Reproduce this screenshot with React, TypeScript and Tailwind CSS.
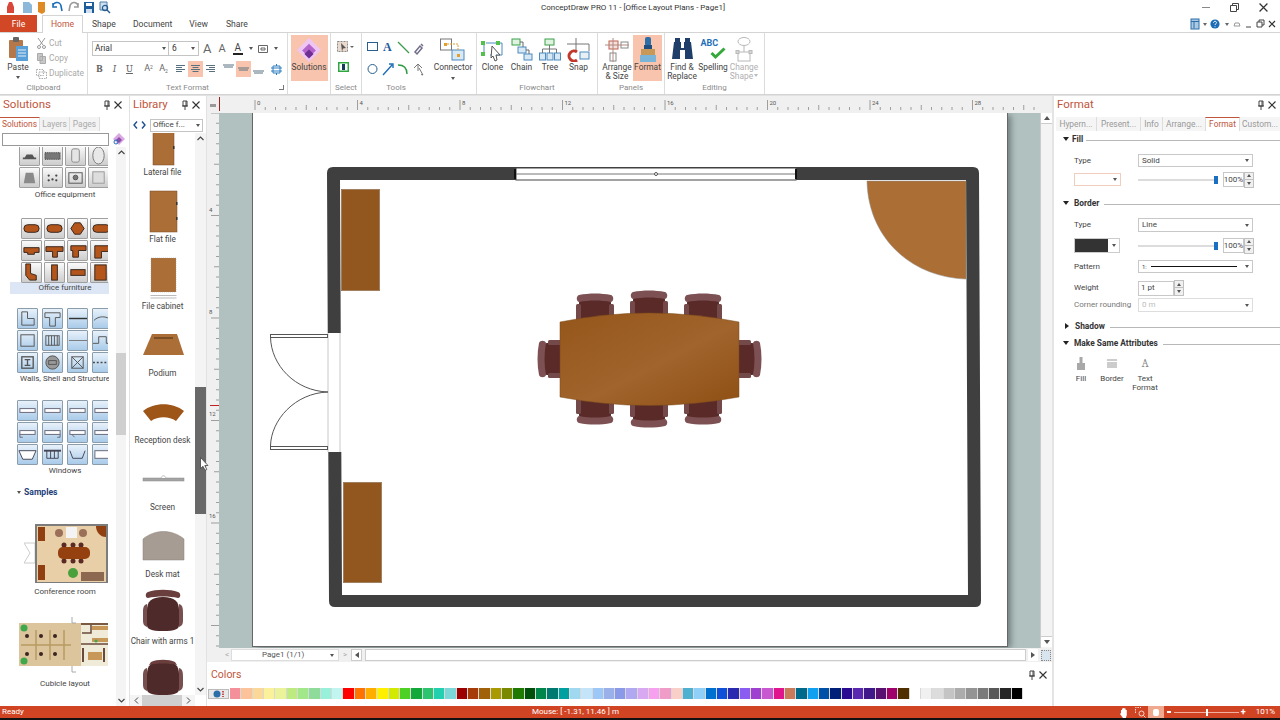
import type { ReactNode } from 'react';

const FONT = 'Roboto, "Open Sans", sans-serif';

const COLORS = [
    '#f4909a', '#fcc29a', '#fcd898', '#fbf19a', '#eaf29a', '#bdeb80', '#a2e88a', '#8fdc9a', '#96f0da', '#c2f5f0',
    '#ff0000', '#ff7300', '#ffae00', '#fff000', '#d2ea00', '#4fd024', '#12a83a', '#2cc46f', '#22d0b0', '#7cd8d8',
    '#9c0000', '#a53c0a', '#a0610a', '#a89a00', '#7a8a00', '#1e7a00', '#004f0a', '#00854a', '#007a70', '#00a0a0',
    '#a0d8f0', '#c4e4fa', '#9cc8f8', '#9ab0e8', '#8a9ae8', '#b0a8f0', '#d8a8f0', '#f8a0f0', '#f09cc8', '#f8d0c8',
    '#50b0d0', '#90d0f8', '#0070d0', '#1050d8', '#2a2ab0', '#8a5cf0', '#a040d0', '#c858d0', '#e0148c', '#c87a5a',
    '#006a8c', '#10a0f0', '#0050a8', '#001f78', '#2a0a90', '#5a28b0', '#40188a', '#5a1070', '#a0006a', '#503000',
    '#ffffff', '#f0f0f0', '#dcdcdc', '#c4c4c4', '#acacac', '#949494', '#7a7a7a', '#585858', '#262626', '#000000',
];

function Caret({ className = '' }: { className?: string }) {
    return <span className={'inline-block w-0 h-0 border-l-[2.5px] border-r-[2.5px] border-t-[3px] border-l-transparent border-r-transparent border-t-[#555] ' + className} />;
}

function Pin() {
    return (
        <svg width="8" height="10" viewBox="0 0 8 10" fill="none" stroke="#444" strokeWidth="1">
            <path d="M2 1h4v5H2zM1 6h6M4 6v4M5 1v5" />
        </svg>
    );
}

function CloseX({ size = 8, color = '#333' }: { size?: number; color?: string }) {
    return (
        <svg width={size} height={size} viewBox="0 0 8 8" stroke={color} strokeWidth="1.1">
            <path d="M0.5 0.5l7 7M7.5 0.5l-7 7" />
        </svg>
    );
}

function PanelHeader({ title, right = 'pr-[6px]' }: { title: string; right?: string }) {
    return (
        <div className={'h-[21px] shrink-0 flex items-center justify-between pl-[3px] pb-[3px] ' + right}>
            <span className="text-[11.5px] text-[#c1553b]">{title}</span>
            <div className="flex items-center gap-[3px]"><Pin /><CloseX /></div>
        </div>
    );
}

function QuickAccess() {
    return (
        <div className="absolute left-[7px] top-0 h-[15px] flex items-center gap-[6px]">
            <svg width="104" height="13" viewBox="0 0 104 13">
                <path d="M0 12V6l2-5h3l2 5v6z" fill="#d8473a" />
                <path d="M16 1h6l3 3v8h-9z" fill="#8cb8da" />
                <path d="M31 1h7v10l-3 2-4-2z" fill="#e08a26" />
                <path d="M46 6a4 4 0 0 1 8-1l1 5M46 2v4h4" fill="none" stroke="#1c6db5" strokeWidth="1.6" />
                <path d="M71 6a4 4 0 0 0-8-1l-1 5M71 2v4h-4" fill="none" stroke="#9a9a9a" strokeWidth="1.6" />
                <rect x="77" y="1" width="10" height="11" fill="#1f5c9c" />
                <rect x="79" y="2" width="6" height="3" fill="#fff" />
                <rect x="79" y="8" width="6" height="4" fill="#cfe0ef" />
                <path d="M93 1h7v8h-7z" fill="#cfe0ef" stroke="#4a7fae" />
                <circle cx="98" cy="7" r="2.6" fill="none" stroke="#275d8f" strokeWidth="1.2" />
                <path d="M100 9l3 3" stroke="#275d8f" strokeWidth="1.4" />
            </svg>
        </div>
    );
}

function TitleBar() {
    return (
        <div className="relative h-[15px] shrink-0 flex items-center justify-center pr-[14px] pt-px">
            <QuickAccess />
            <span className="text-[8px] text-[#333]">ConceptDraw PRO 11 - [Office Layout Plans - Page1]</span>
            <div className="absolute right-[12px] top-[3px] flex items-center gap-[20px]">
                <div className="w-[8px] h-px bg-[#888]" />
                <svg width="9" height="9" viewBox="0 0 9 9" fill="none" stroke="#444"><path d="M0.5 2.5h6v6h-6zM2.5 2.5v-2h6v6h-2" /></svg>
                <CloseX size={9} />
            </div>
        </div>
    );
}

function TabsRow() {
    return (
        <div className="relative h-[18px] shrink-0 flex items-end border-b border-[#d4d4d4] text-[8.6px] text-[#444]">
            <div className="w-[37px] h-[17px] bg-[#d24726] text-white flex items-center justify-center pt-px">File</div>
            <div className="ml-[5px] w-[41px] h-[18px] bg-white border border-b-0 border-[#d4d4d4] text-[#c1553b] flex items-center justify-center relative top-px">Home</div>
            <span className="ml-[9px] self-center pt-px">Shape</span>
            <span className="ml-[17px] self-center pt-px">Document</span>
            <span className="ml-[17px] self-center pt-px">View</span>
            <span className="ml-[18px] self-center pt-px">Share</span>
            <div className="absolute right-[2px] top-[2px] h-[14px] flex items-center">
                <svg width="88" height="12" viewBox="0 0 88 12">
                    <rect x="1" y="1" width="8" height="10" fill="#a9c9e4" stroke="#2c6ea8" />
                    <path d="M1 3.5h8M4 3.5v7" stroke="#2c6ea8" />
                    <path d="M13 5l2 3 2-3z" fill="#666" />
                    <circle cx="25" cy="6" r="4.6" fill="#1c6db5" />
                    <path d="M23.5 4.8c0-2 3-2 3 0 0 1-1.5 1-1.5 2.2M25 8.3v.8" stroke="#fff" fill="none" />
                    <path d="M35 5l2 3 2-3z" fill="#666" />
                    <path d="M44 8l1-3h4l1 3z" fill="none" stroke="#999" />
                    <path d="M56 9h5" stroke="#444" />
                    <path d="M67 4h5v5h-5zM69 4V2h5v5h-2" fill="none" stroke="#444" />
                    <path d="M79 3l6 6M85 3l-6 6" stroke="#333" strokeWidth="1.2" />
                </svg>
            </div>
        </div>
    );
}

function Group({ width, label, children, line = true }: { width: string; label: string; children: ReactNode; line?: boolean }) {
    return (
        <div className={'shrink-0 h-full flex flex-col ' + width + (line ? ' border-r border-[#dcdcdc]' : '')}>
            <div className="flex-1 min-h-0 flex">{children}</div>
            <div className="h-[13px] text-[8px] text-[#8a8a8a] text-center leading-[13px] relative">{label}</div>
        </div>
    );
}

function BigButton({ width, label, icon, active, muted, caret }: { width: string; label: ReactNode; icon: ReactNode; active?: boolean; muted?: boolean; caret?: boolean }) {
    return (
        <div className={'shrink-0 h-[46px] mt-[2px] flex flex-col items-center text-[8.4px] leading-[9px] text-center ' + width + (active ? ' bg-[#f8c4ae]' : '') + (muted ? ' text-[#b0b0b0]' : ' text-[#444]')}>
            <div className="h-[27px] flex items-center justify-center shrink-0 pt-[2px]">{icon}</div>
            <div className="mt-px">{label}</div>
            {caret && <Caret className="mt-[5px]" />}
        </div>
    );
}

function SmallEdit({ label, children }: { label: string; children: ReactNode }) {
    return (
        <div className="h-[15px] flex items-center gap-[2px] text-[8.4px] text-[#aaa]">
            <span className="w-[11px] flex justify-center">{children}</span>
            {label}
        </div>
    );
}

function FormatIcon({ children, active, w = 'w-[15px]' }: { children: ReactNode; active?: boolean; w?: string }) {
    return <div className={'h-[16px] shrink-0 flex items-center justify-center text-[#666] ' + w + (active ? ' bg-[#f8c4ae]' : '')}>{children}</div>;
}

function AlignLines({ d }: { d: string }) {
    return <svg width="11" height="10" viewBox="0 0 11 10" stroke="#59707f" strokeWidth="1"><path d={d} /></svg>;
}

function Clipboard() {
    return (
        <Group width="w-[88px]" label="Clipboard">
            <div className="w-[36px] h-[46px] mt-[2px] flex flex-col items-center text-[8.4px] text-[#444] shrink-0">
                <svg className="mt-[2px]" width="19" height="24" viewBox="0 0 19 24">
                    <rect x="0" y="3" width="14" height="18" rx="1" fill="#b4784a" />
                    <rect x="4" y="0" width="6" height="5" rx="1" fill="#666" />
                    <rect x="7" y="9" width="12" height="15" fill="#5aa0d8" />
                    <path d="M9 13h8M9 16h8M9 19h8" stroke="#e4f0f8" />
                </svg>
                <span className="mt-px leading-[10px]">Paste</span>
                <Caret className="mt-[4px]" />
            </div>
            <div className="flex flex-col pt-[3px]">
                <SmallEdit label="Cut">
                    <svg width="9" height="11" viewBox="0 0 9 11" fill="none" stroke="#999"><path d="M1 0l5 7M8 0L3 7" /><circle cx="2" cy="9" r="1.5" /><circle cx="7" cy="9" r="1.5" /></svg>
                </SmallEdit>
                <SmallEdit label="Copy">
                    <svg width="9" height="11" viewBox="0 0 9 11" fill="#c8c8c8" stroke="#aaa"><path d="M.5.5h5v7h-5zM3 3.5h5.5v7H3z" /></svg>
                </SmallEdit>
                <SmallEdit label="Duplicate">
                    <svg width="11" height="10" viewBox="0 0 11 10" fill="none" stroke="#aaa" strokeDasharray="1.5 1"><path d="M.5.5h7v6h-7zM3 3h7.5v6.5H3z" /></svg>
                </SmallEdit>
            </div>
        </Group>
    );
}

function TextFormat() {
    return (
        <Group width="w-[200px]" label="Text Format">
            <div className="flex flex-col pl-[4px] pt-[8px] relative w-full">
                <div className="flex items-center h-[15px]">
                    <div className="w-[77px] h-[15px] border border-[#c4c4c4] flex items-center justify-between px-[2px] text-[8.4px] text-[#333]">Arial<Caret /></div>
                    <div className="w-[30px] h-[15px] border border-l-0 border-[#c4c4c4] flex items-center justify-between px-[3px] text-[8.4px] text-[#333]">6<Caret /></div>
                    <span className="ml-[4px] text-[13px] text-[#666] leading-none">A</span>
                    <span className="ml-[7px] text-[11px] text-[#666] leading-none">A</span>
                    <div className="ml-[7px] flex flex-col items-center text-[10px] leading-[10px] text-[#444]">A<div className="w-[10px] h-[2px] bg-[#222]" /></div>
                    <Caret className="ml-[6px]" />
                    <svg className="ml-[5px]" width="10" height="8" viewBox="0 0 10 8" fill="none" stroke="#666"><path d="M.5.5h9v7h-9zM3 3h4v2H3z" /></svg>
                    <Caret className="ml-[6px]" />
                </div>
                <div className="flex items-center h-[16px] mt-[5px]">
                    <FormatIcon><b className="text-[10px] font-serif">B</b></FormatIcon>
                    <FormatIcon><i className="text-[10px] font-serif">I</i></FormatIcon>
                    <FormatIcon><u className="text-[10px] font-serif">U</u></FormatIcon>
                    <div className="w-[4px]" />
                    <FormatIcon><span className="text-[9px]">A<sup className="text-[5px]">2</sup></span></FormatIcon>
                    <FormatIcon><span className="text-[9px]">A<sub className="text-[5px]">2</sub></span></FormatIcon>
                    <div className="w-[2px]" />
                    <FormatIcon><AlignLines d="M1 1.5h9M1 3.5h6M1 5.5h9M1 7.5h6" /></FormatIcon>
                    <FormatIcon active><AlignLines d="M1 1.5h9M2.5 3.5h6M1 5.5h9M2.5 7.5h6" /></FormatIcon>
                    <FormatIcon><AlignLines d="M1 1.5h9M4 3.5h6M1 5.5h9M4 7.5h6" /></FormatIcon>
                    <div className="w-[3px]" />
                    <FormatIcon><AlignLines d="M0 1h11M1 3h9" /></FormatIcon>
                    <FormatIcon active><AlignLines d="M0 4h11M1 6h9" /></FormatIcon>
                    <FormatIcon><AlignLines d="M0 7h11M1 9h9" /></FormatIcon>
                    <div className="w-[2px]" />
                    <FormatIcon w="w-[16px]">
                        <svg width="11" height="11" viewBox="0 0 11 11" fill="none" stroke="#2c7cc0"><path d="M2 2h7v7H2zM0 4h11M0 7h11M5.5 0v2M5.5 9v2" /></svg>
                    </FormatIcon>
                </div>
                <div className="absolute right-[3px] bottom-[-9px] w-[5px] h-[5px] border-r border-b border-[#777]" />
            </div>
        </Group>
    );
}

function SolutionsIcon() {
    return (
        <svg width="24" height="24" viewBox="0 0 21 21">
            <path d="M10.5 0L21 10.5 10.5 21 0 10.5z" fill="#efc6f3" />
            <path d="M10.5 5l6 6-6 6-6-6z" fill="#b264c8" />
            <path d="M10.5 10l4 4-4 4-4-4z" fill="#6e2d92" />
        </svg>
    );
}

function SelectTools() {
    return (
        <Group width="w-[31px]" label="Select">
            <div className="w-full flex flex-col items-center gap-[8px] pt-[8px]">
                <svg width="18" height="13" viewBox="0 0 18 13"><rect x=".5" y=".5" width="10" height="10" fill="#ead9cc" stroke="#888" strokeDasharray="2 1" /><path d="M4 2l5 5-3 .5-1 3z" fill="#555" /><path d="M13 5l2 2 2-2z" fill="#666" /></svg>
                <svg className="mr-[6px]" width="11" height="10" viewBox="0 0 11 10"><rect width="11" height="10" fill="#2ea83e" /><rect x="1.5" y="1.5" width="8" height="7" fill="#fff" /><rect x="4" y="2" width="3" height="6" fill="#173a5a" /></svg>
            </div>
        </Group>
    );
}

function ToolsGroup() {
    return (
        <Group width="w-[68px]" label="Tools" line={false}>
            <svg className="ml-[5px] mt-[8px]" width="58" height="36" viewBox="0 0 58 36" fill="none">
                <rect x=".5" y="1.5" width="10" height="8" stroke="#285f8f" />
                <text x="16" y="10" fontFamily="Liberation Serif, serif" fontWeight="700" fontSize="12" fill="#1f5c9c">A</text>
                <path d="M31 1l11 11" stroke="#3a9a4c" strokeWidth="1.3" />
                <path d="M48 11l5-6 2 2-5 6zM54 3l2 2" stroke="#6e6e8a" strokeWidth="1.5" />
                <circle cx="5.5" cy="28" r="4.5" stroke="#285f8f" />
                <path d="M16 34l9-10M22 23h4v4" stroke="#1f70b8" strokeWidth="1.4" />
                <path d="M31 24c6 0 9 3 9 9" stroke="#2e9a44" strokeWidth="1.4" />
                <path d="M47 27l4-4 4 4M51 24v6M52 27l4 7-2-.5" stroke="#777" />
            </svg>
        </Group>
    );
}

function ConnectorIcon() {
    return (
        <svg width="26" height="24" viewBox="0 0 26 24" fill="none">
            <rect x=".5" y="1" width="11" height="11" stroke="#777" fill="#fff" />
            <rect x="12" y="12" width="12" height="10" stroke="#4c8bc0" fill="#d8e8f4" />
            <rect x="4" y="5" width="3" height="3" fill="#e0a030" />
            <rect x="17" y="16" width="3" height="3" fill="#e0a030" />
            <path d="M7 6h11v7" stroke="#e0a030" strokeDasharray="2 1" />
        </svg>
    );
}

function CloneIcon() {
    return (
        <svg width="24" height="24" viewBox="0 0 24 24" fill="none">
            <path d="M5 5h16v12H9" stroke="#4c8bc0" />
            <path d="M3 5v11" stroke="#4c8bc0" />
            <rect x="0" y="3" width="4" height="4" fill="#52c04a" /><rect x="15" y="3" width="4" height="4" fill="#52c04a" /><rect x="0" y="14" width="4" height="4" fill="#52c04a" />
            <path d="M11 8l8 9-4 0 1 5-2 1-2-5-2 2z" fill="#fff" stroke="#555" />
        </svg>
    );
}

function ChainIcon() {
    return (
        <svg width="22" height="23" viewBox="0 0 22 23" fill="none">
            <rect x="1" y="1" width="8" height="6" stroke="#3aa04a" fill="#e0f2e0" />
            <rect x="7" y="9" width="8" height="6" stroke="#4c8bc0" fill="#d8e8f4" />
            <rect x="13" y="16" width="8" height="6" stroke="#4c8bc0" fill="#d8e8f4" />
            <path d="M9 4h3v5M15 12h3v4" stroke="#666" />
        </svg>
    );
}

function TreeIcon() {
    return (
        <svg width="22" height="23" viewBox="0 0 22 23" fill="none">
            <rect x="6" y="1" width="9" height="6" stroke="#3aa04a" fill="#e0f2e0" />
            <rect x="0.5" y="15" width="6" height="7" stroke="#4c8bc0" fill="#d8e8f4" />
            <rect x="8" y="15" width="6" height="7" stroke="#4c8bc0" fill="#d8e8f4" />
            <rect x="15.5" y="15" width="6" height="7" stroke="#4c8bc0" fill="#d8e8f4" />
            <path d="M10.5 7v8M3.5 15v-4h14v4" stroke="#777" />
        </svg>
    );
}

function SnapIcon() {
    return (
        <svg width="24" height="24" viewBox="0 0 24 24" fill="none">
            <path d="M0 6h22M9 0v12M22 6v7" stroke="#777" />
            <path d="M10 14a5 5 0 1 0 0 8" stroke="#c0392b" strokeWidth="3" />
            <rect x="13" y="14" width="9" height="7" stroke="#4c8bc0" fill="#e8f0f6" />
        </svg>
    );
}

function ArrangeIcon() {
    return (
        <svg width="24" height="24" viewBox="0 0 24 24" fill="none">
            <rect x="4" y="3" width="9" height="8" stroke="#c06050" fill="#f4e0dc" />
            <rect x="16" y="4" width="7" height="6" stroke="#888" />
            <rect x="5" y="15" width="6" height="8" stroke="#888" />
            <path d="M0 7h24M8 0v24" stroke="#b08880" />
        </svg>
    );
}

function BrushIcon() {
    return (
        <svg width="20" height="26" viewBox="0 0 20 26">
            <rect x="7" y="0" width="6" height="9" rx="2" fill="#2c6ea8" />
            <rect x="6" y="8" width="8" height="4" fill="#1f4f80" />
            <path d="M3 12h14v6H3z" fill="#c89858" />
            <path d="M2 18h16v7H2z" fill="#7ab4d8" />
        </svg>
    );
}

function BinocularsIcon() {
    return (
        <svg width="21" height="23" viewBox="0 0 21 23" fill="#1f3f6a">
            <path d="M3 0h5v4H3zM13 0h5v4h-5z" />
            <path d="M2 4h7v6h3V4h7l2 17h-8v-9h-5v9H0z" />
        </svg>
    );
}

function SpellingIcon() {
    return (
        <div className="relative w-[25px] h-[22px]">
            <span className="absolute left-0 top-0 text-[9px] font-bold text-[#1f70b8] leading-none">ABC</span>
            <svg className="absolute left-[9px] top-[8px]" width="16" height="13" viewBox="0 0 16 13" fill="none" stroke="#35a83a" strokeWidth="3"><path d="M1.5 6l4 4 9-8.5" /></svg>
        </div>
    );
}

function ChangeShapeIcon() {
    return (
        <svg width="20" height="25" viewBox="0 0 20 25" fill="none" stroke="#b8b8b8">
            <ellipse cx="10" cy="4.5" rx="6" ry="4" />
            <path d="M10 9v6" />
            <rect x="4" y="15" width="12" height="9" />
            <rect x="2" y="13.5" width="3" height="3" fill="#d8d8d8" /><rect x="15" y="13.5" width="3" height="3" fill="#d8d8d8" />
        </svg>
    );
}

function Ribbon() {
    return (
        <div className="h-[62px] shrink-0 flex border-b border-[#d4d4d4]">
            <Clipboard />
            <TextFormat />
            <div className="w-[43px] shrink-0 h-full flex justify-center border-r border-[#dcdcdc]">
                <BigButton width="w-[37px]" label="Solutions" icon={<SolutionsIcon />} active />
            </div>
            <SelectTools />
            <ToolsGroup />
            <div className="w-[47px] shrink-0 h-full border-r border-[#dcdcdc] flex justify-center">
                <BigButton width="w-[44px]" label="Connector" icon={<ConnectorIcon />} caret />
            </div>
            <Group width="w-[121px]" label="Flowchart">
                <div className="w-px" />
                <BigButton width="w-[29px]" label="Clone" icon={<CloneIcon />} />
                <BigButton width="w-[29px]" label="Chain" icon={<ChainIcon />} />
                <BigButton width="w-[28px]" label="Tree" icon={<TreeIcon />} />
                <BigButton width="w-[29px]" label="Snap" icon={<SnapIcon />} />
            </Group>
            <Group width="w-[67px]" label="Panels">
                <div className="w-[3px]" />
                <BigButton width="w-[32px]" label={<>Arrange<br />&amp; Size</>} icon={<ArrangeIcon />} />
                <BigButton width="w-[29px]" label="Format" icon={<BrushIcon />} active />
            </Group>
            <Group width="w-[100px]" label="Editing">
                <div className="w-px" />
                <BigButton width="w-[32px]" label={<>Find &amp;<br />Replace</>} icon={<BinocularsIcon />} />
                <BigButton width="w-[30px]" label="Spelling" icon={<SpellingIcon />} />
                <BigButton width="w-[32px]" label={<>Change<br />Shape<Caret className="ml-[1px] mb-[2px] opacity-40" /></>} icon={<ChangeShapeIcon />} muted />
            </Group>
        </div>
    );
}

const ORANGE = '#b4561c';
const DARK = '#33241a';

// tile drawings use a 20x20 box
const EQUIPMENT: ReactNode[] = [
    <path key="a" d="M3 12h14v2H3zM7 9h6l2 3H5z" fill="#555" />,
    <rect key="b" x="2" y="7" width="16" height="7" fill="#777" stroke="#333" strokeDasharray="1 1" />,
    <rect key="c" x="6" y="3" width="8" height="14" rx="2" fill="#e4e4e4" stroke="#888" />,
    <ellipse key="d" cx="10" cy="10" rx="6" ry="9" fill="#e8e8e8" stroke="#777" />,
    <path key="e" d="M6 5h8l2 11H4z" fill="#8a8a8a" />,
    <g key="f" fill="#444"><circle cx="6" cy="8" r="1.2" /><circle cx="10" cy="12" r="1.2" /><circle cx="14" cy="8" r="1.2" /><circle cx="6" cy="13" r="1.2" /><circle cx="14" cy="13" r="1.2" /></g>,
    <g key="g" fill="none" stroke="#555"><rect x="3" y="5" width="14" height="11" /><circle cx="10" cy="10" r="2.5" fill="#777" /></g>,
    <rect key="h" x="4" y="4" width="12" height="12" fill="#ddd" stroke="#999" />,
];

const tbl = (k: string, d: ReactNode) => <g key={k} fill={ORANGE} stroke={DARK} strokeWidth="1">{d}</g>;

const FURNITURE: ReactNode[] = [
    tbl('a', <rect x="2" y="6" width="16" height="8" rx="4" />),
    tbl('b', <rect x="2" y="6" width="16" height="8" rx="4" />),
    tbl('c', <path d="M7 4h6l4 6-4 6H7l-4-6z" />),
    tbl('d', <rect x="2" y="6" width="18" height="8" rx="4" />),
    tbl('e', <path d="M2 7h16v5h-5v2H6v-2H2z" />),
    tbl('f', <path d="M1 6h18v5h-6v6H8v-6H1z" />),
    tbl('g', <path d="M3 5h16v5h-8v7H5v-7H3z" />),
    tbl('h', <path d="M4 5h16v6h-9v7H4z" />),
    tbl('i', <path d="M4 1h5v10l6 2v5H8l-4-5z" />),
    tbl('j', <rect x="7" y="2" width="6" height="16" />),
    tbl('k', <rect x="3" y="7" width="15" height="6" />),
    tbl('l', <rect x="4" y="2" width="12" height="16" />),
];

const W = '#555';
const WALLS: ReactNode[] = [
    <path key="a" d="M4 3h6v7h7v7H4z" fill="none" stroke={W} />,
    <path key="b" d="M2 4h16v5h-5v9H7V9H2z" fill="none" stroke={W} />,
    <path key="c" d="M1 10h19" stroke="#333" strokeWidth="1.5" />,
    <path key="d" d="M1 12c5-5 13-5 19 0" fill="none" stroke={W} />,
    <rect key="e" x="3" y="4" width="14" height="12" fill="none" stroke={W} />,
    <g key="f" fill="none" stroke={W}><rect x="3" y="5" width="14" height="10" /><path d="M6 5v10M9 5v10M12 5v10M15 5v10" /></g>,
    <path key="g" d="M1 10h19" stroke="#777" />,
    <path key="h" d="M0 13h6V6h8v7h6" fill="none" stroke={W} />,
    <g key="i" fill="none" stroke={W} strokeWidth="1.4"><rect x="4" y="4" width="12" height="12" /><path d="M7 7h6M10 7v6M7 13h6" /></g>,
    <g key="j" fill="#999" stroke="#555"><circle cx="10" cy="10" r="7" /><rect x="6" y="8" width="8" height="4" /></g>,
    <g key="k" fill="none" stroke={W}><rect x="4" y="4" width="12" height="12" /><path d="M4 4l12 12M16 4L4 16" /></g>,
    <path key="l" d="M0 10h20" stroke="#444" strokeDasharray="2 2" strokeWidth="1.5" />,
];

const win = (k: string, extra?: ReactNode) => (
    <g key={k} fill="#fff" stroke="#667">
        <rect x="2" y="8" width="16" height="4" />
        {extra}
    </g>
);

const WINDOWS: ReactNode[] = [
    win('a'), win('b'), win('c'), win('d'),
    win('e', <path d="M2 12v3h3" fill="none" />), win('f', <path d="M18 12v3h-3" fill="none" />), win('g', <path d="M4 12l3 3" fill="none" />), win('h', <path d="M14 8l3-3" fill="none" />),
    <path key="i" d="M1 6h18l-4 9H5z" fill="#fff" stroke="#445" />,
    <g key="j" fill="none" stroke="#445"><path d="M1 6h18" strokeWidth="2" /><path d="M4 6v8M8 6v8M12 6v8M16 6v8M4 14h12" /></g>,
    <path key="k" d="M2 6l3 8h10l3-8" fill="none" stroke="#445" />,
    <rect key="l" x="2" y="6" width="18" height="8" fill="#fff" stroke="#667" />,
];

function Tile({ blue, children }: { blue?: boolean; children: ReactNode }) {
    const tone = blue
        ? 'bg-gradient-to-b from-[#e8f1fa] to-[#a9cbe9] border-[#8b9cab]'
        : 'bg-gradient-to-b from-[#fafafa] to-[#cdcdcd] border-[#a0a0a0]';
    return (
        <div className={'shrink-0 w-[21px] h-[21px] border rounded-[1px] ' + tone}>
            <svg className="w-full h-full" viewBox="0 0 20 20">{children}</svg>
        </div>
    );
}

function TileGroup({ items, rows, indent, gap, blue }: { items: ReactNode[]; rows: number; indent: string; gap: string; blue?: boolean }) {
    const perRow = 4;
    const lines = Array.from({ length: rows }, (_, r) => items.slice(r * perRow, (r + 1) * perRow));
    return (
        <div className={'w-[108px] overflow-hidden flex flex-col gap-px ' + indent}>
            {lines.map((line, i) => (
                <div key={i} className={'flex ' + gap}>
                    {line.map((t, j) => <Tile key={j} blue={blue}>{t}</Tile>)}
                </div>
            ))}
        </div>
    );
}

function TileLabel({ text, selected }: { text: string; selected?: boolean }) {
    return (
        <div className={'ml-[10px] w-[99px] overflow-hidden h-[12px] leading-[12px] text-[8px] text-[#444] ' + (selected ? 'bg-[#dce6f4]' : '')}>
            <div className="w-[110px] text-center whitespace-nowrap">{text}</div>
        </div>
    );
}

function ConferenceThumb() {
    return (
        <svg className="block ml-[24px]" width="84" height="59" viewBox="24 524 84 59">
            <path d="M24 543h11v20H24l6-10z" fill="#fff" stroke="#ccc" />
            <rect x="36" y="525" width="71" height="58" fill="#e8cfa8" stroke="#7c7c7c" strokeWidth="2" />
            <rect x="38" y="527" width="7" height="14" fill="#8f3f10" />
            <rect x="38" y="565" width="7" height="15" fill="#8f3f10" />
            <path d="M96 526h10v11c-6 0-10-5-10-11z" fill="#8f3f10" />
            <rect x="66" y="527" width="11" height="11" fill="#f4f4f4" />
            <circle cx="59" cy="533" r="4" fill="#9a7058" /><circle cx="83" cy="533" r="4" fill="#9a7058" />
            <g fill="#5a2a26">
                <circle cx="64" cy="545" r="2.5" /><circle cx="73" cy="545" r="2.5" /><circle cx="81" cy="545" r="2.5" />
                <circle cx="64" cy="561" r="2.5" /><circle cx="73" cy="561" r="2.5" /><circle cx="81" cy="561" r="2.5" />
            </g>
            <rect x="58" y="547" width="32" height="12" rx="5" fill="#95400f" />
            <circle cx="73" cy="573" r="5" fill="#4aa03a" />
            <rect x="81" y="572" width="23" height="9" fill="#8c6850" />
        </svg>
    );
}

function CubicleThumb() {
    return (
        <svg className="block" width="108" height="59" viewBox="0 617 108 59">
            <rect x="19" y="623" width="62" height="43" fill="#dcc49c" />
            <rect x="81" y="623" width="27" height="43" fill="#f0ead8" />
            <g stroke="#b89a62" strokeWidth="1.5" fill="none">
                <path d="M21 645h50M36 630v30M50 630v30M64 630v30" />
            </g>
            <g fill="#3c2420">
                <circle cx="27" cy="636" r="2" /><circle cx="41" cy="636" r="2" /><circle cx="55" cy="636" r="2" />
                <circle cx="27" cy="654" r="2" /><circle cx="41" cy="654" r="2" /><circle cx="55" cy="654" r="2" />
            </g>
            <circle cx="24" cy="628" r="3.5" fill="#3ea84a" /><circle cx="24" cy="661" r="3.5" fill="#3ea84a" />
            <path d="M72 617v6h4M72 666v6h4" fill="none" stroke="#aaa" />
            <rect x="81" y="623" width="27" height="2" fill="#7a5a40" />
            <path d="M82 633h9v-8M81 644h27" stroke="#6a4a3a" strokeWidth="1.5" fill="none" />
            <rect x="92" y="626" width="16" height="4" fill="#c89858" />
            <rect x="92" y="638" width="16" height="4" fill="#c89858" />
            <rect x="88" y="652" width="14" height="8" fill="#c89858" />
            <path d="M83 648v14M104 648v14" stroke="#6a4a3a" strokeWidth="2" />
            <circle cx="96" cy="641" r="1.5" fill="#3ea84a" />
        </svg>
    );
}

function ArrowBtn({ d, className = '' }: { d: string; className?: string }) {
    return <svg className={className} width="7" height="5" viewBox="0 0 7 5" fill="none" stroke="#444" strokeWidth="1.1"><path d={d} /></svg>;
}

function SolutionsPanel() {
    return (
        <div className="w-[129px] shrink-0 flex flex-col min-h-0">
            <PanelHeader title="Solutions" right="pr-[7px]" />
            <div className="h-[14px] shrink-0 flex text-[8.4px] text-[#aaa] relative">
                <div className="w-[40px] border-t border-[#c1553b] border-r border-r-[#ddd] text-[#c1553b] flex items-center justify-center">Solutions</div>
                <div className="w-[30px] bg-[#f3f3f3] border-r border-[#ddd] flex items-center justify-center">Layers</div>
                <div className="w-[30px] bg-[#f3f3f3] border-r border-[#ddd] flex items-center justify-center">Pages</div>
            </div>
            <div className="h-[16px] shrink-0 flex items-center pl-[2px]">
                <div className="w-[107px] h-[13px] border border-[#999] bg-white" />
                <svg className="ml-[4px]" width="12" height="12" viewBox="0 0 12 12"><path d="M6 0l6 6-6 6-6-6z" fill="#d9a8e4" /><path d="M6 4l3 3-3 3-3-3z" fill="#8d4ea8" /><circle cx="3" cy="9" r="2" fill="none" stroke="#1f70b8" /></svg>
            </div>
            <div className="flex-1 min-h-0 flex overflow-hidden pr-[3px]">
                <div className="w-[116px] shrink-0 overflow-hidden">
                    <div className="-mt-[2px]"><TileGroup items={EQUIPMENT} rows={2} indent="pl-[19px]" gap="gap-[2px]" /></div>
                    <div className="mt-px"><TileLabel text="Office equipment" /></div>
                    <div className="mt-[17px]"><TileGroup items={FURNITURE} rows={3} indent="pl-[21px]" gap="gap-[2px]" /></div>
                    <div className="-mt-px"><TileLabel text="Office furniture" selected /></div>
                    <div className="mt-[14px]"><TileGroup items={WALLS} rows={3} indent="pl-[17px]" gap="gap-[4px]" blue /></div>
                    <TileLabel text="Walls, Shell and Structure" />
                    <div className="mt-[15px]"><TileGroup items={WINDOWS} rows={3} indent="pl-[17px]" gap="gap-[4px]" blue /></div>
                    <TileLabel text="Windows" />
                    <div className="mt-[9px] h-[12px] pl-[17px] flex items-center gap-[3px] text-[8.6px] font-bold text-[#1f3f7a]">
                        <Caret className="border-t-[#1f3f7a]" />Samples
                    </div>
                    <div className="mt-[26px]"><ConferenceThumb /></div>
                    <div className="mt-[3px]"><TileLabel text="Conference room" /></div>
                    <div className="mt-[19px]"><CubicleThumb /></div>
                    <div className="mt-[2px]"><TileLabel text="Cubicle layout" /></div>
                </div>
                <div className="w-[10px] shrink-0 bg-[#f4f4f4] flex flex-col items-center pb-[3px] pt-[3px]">
                    <ArrowBtn d="M.5 4l3-3 3 3" />
                    <div className="w-full h-[82px] bg-[#cfcfcf] mt-[198px]" />
                    <ArrowBtn className="mt-auto" d="M.5 1l3 3 3-3" />
                </div>
            </div>
        </div>
    );
}

function BigChair({ solid }: { solid?: boolean }) {
    return (
        <g>
            <path d="M146 610c0-8 4-13 16-13s16 5 16 13v15c0 4-4 6-16 6s-16-2-16-6z" fill="#4e2a2a" />
            <path d="M146 604c-4 1-4 5-4 9v8c0 3 1 5 4 6zM178 604c4 1 4 5 4 9v8c0 3-1 5-4 6z" fill="#76504f" />
            {solid
                ? <path d="M150 598c6-3 18-3 24 0l2 3c-8-2-20-2-28 0z" fill="#6b3e3e" />
                : <path d="M147 592c8-3 22-3 30 0 3 1 3 6 0 6-8-2-22-2-30 0-3 0-3-5 0-6z" fill="#6b3e3e" />}
        </g>
    );
}

const LIBRARY: { label: string; draw: ReactNode }[] = [
    { label: 'Lateral file', draw: <g><rect x="152" y="20" width="21" height="33" fill="#ab6e37" stroke="#7a4a20" strokeWidth=".5" /><rect x="172" y="34" width="1.5" height="3" fill="#333" /></g> },
    { label: 'Flat file', draw: <g><rect x="149" y="12" width="27" height="41" fill="#ab6e37" stroke="#7a4a20" strokeWidth=".5" /><rect x="175" y="23" width="1.5" height="3" fill="#333" /><rect x="175" y="38" width="1.5" height="3" fill="#333" /></g> },
    { label: 'File cabinet', draw: <g><rect x="150" y="12" width="25" height="34" fill="#ab6e37" stroke="#9a9a9a" strokeWidth=".5" strokeDasharray="1 1" /><path d="M149.5 49.5h26M149.5 52h26" stroke="#bbb" /></g> },
    { label: 'Podium', draw: <g><path d="M151 21h25l7 21h-41z" fill="#ab6e37" /><path d="M153 25h19" stroke="#4a2c10" /></g> },
    { label: 'Reception desk', draw: <path d="M142 31c11-9 30-9 41 0l-8 10c-7-5-18-5-25 0z" fill="#9d5518" /> },
    { label: 'Screen', draw: <g><rect x="142" y="31" width="41" height="3" fill="#a4a4a4" stroke="#888" strokeWidth=".5" /><path d="M160 31c1-3 4-3 5 0" fill="#fff" stroke="#888" strokeWidth=".5" /></g> },
    { label: 'Desk mat', draw: <path d="M142 25c12-10 29-10 41 0v21h-41z" fill="#a79c94" stroke="#8a8078" strokeWidth=".5" /> },
    { label: 'Chair with arms 1', draw: <g transform="translate(0 -581)"><BigChair /></g> },
    { label: '', draw: <g transform="translate(0 -584)"><BigChair solid /></g> },
];

function LibraryPanel() {
    return (
        <div className="w-[78px] shrink-0 flex flex-col min-h-0 border-x border-[#e2e2e2]">
            <PanelHeader title="Library" right="pr-[6px]" />
            <div className="h-[16px] shrink-0 flex items-center pl-[3px]">
                <svg width="13" height="8" viewBox="0 0 13 8" fill="none" stroke="#1f4f90" strokeWidth="1.4"><path d="M4 .5L1 4l3 3.5M9 .5L12 4 9 7.5" /></svg>
                <div className="ml-[4px] w-[53px] h-[13px] border border-[#c4c4c4] flex items-center justify-between px-[2px] text-[8px] text-[#444]">Office f...<Caret /></div>
            </div>
            <div className="flex-1 min-h-0 flex flex-col">
                <div className="flex-1 min-h-0 flex">
                    <div className="w-[65px] shrink-0 overflow-hidden">
                        <div className="-mt-[21px]">
                            {LIBRARY.map((item, i) => (
                                <div key={i} className="h-[67px] flex flex-col items-center">
                                    <svg className="shrink-0" width="65" height="54" viewBox="129 0 65 54">{item.draw}</svg>
                                    <span className="h-[13px] leading-[13px] text-[8.2px] text-[#444] whitespace-nowrap">{item.label}</span>
                                </div>
                            ))}
                        </div>
                    </div>
                    <div className="w-[11px] shrink-0 bg-[#f4f4f4] flex flex-col items-center pt-[3px] pb-[3px]">
                        <ArrowBtn d="M.5 4l3-3 3 3" />
                        <div className="w-full h-[127px] bg-[#696969] mt-[246px]" />
                        <ArrowBtn className="mt-auto" d="M.5 1l3 3 3-3" />
                    </div>
                </div>
                <div className="h-[11px] shrink-0 bg-[#f4f4f4] flex items-center w-[65px] relative">
                    <svg className="ml-[4px]" width="5" height="7" viewBox="0 0 5 7" fill="none" stroke="#444"><path d="M4 .5L1 3.5 4 6.5" /></svg>
                    <div className="ml-[3px] w-[40px] h-full bg-[#cfcfcf]" />
                    <svg className="ml-[4px]" width="5" height="7" viewBox="0 0 5 7" fill="none" stroke="#444"><path d="M1 .5L4 3.5 1 6.5" /></svg>
                </div>
            </div>
        </div>
    );
}

function HorizontalRuler() {
    const ticks = Array.from({ length: 77 }, (_, i) => 255 + i * 10.25);
    return (
        <svg className="block" width="821" height="16" viewBox="219 97 821 16">
            {ticks.map((x, i) => (
                <path key={i} d={'M' + x + ' 110v-' + (i % 10 === 0 ? 10 : i % 5 === 0 ? 5 : 3)} stroke="#666" strokeWidth=".6" />
            ))}
            {['0', '4', '8', '12', '16', '20', '24', '28'].map((t, i) => (
                <text key={t} x={257 + i * 102.5} y="105" fontSize="6" fill="#555">{t}</text>
            ))}
            <path d="M219.5 97v14" stroke="#a02020" />
        </svg>
    );
}

function VerticalRuler() {
    const ticks = Array.from({ length: 53 }, (_, i) => 113 + i * 10.25);
    return (
        <svg className="block" width="12" height="535" viewBox="207 113 12 535">
            {ticks.map((y, i) => (
                <path key={i} d={'M219 ' + y + 'h-' + (i % 10 === 0 ? 8 : i % 5 === 0 ? 5 : 3)} stroke="#666" strokeWidth=".6" />
            ))}
            {['4', '8', '12', '16'].map((t, i) => (
                <text key={t} x="209" y={212 + i * 102} fontSize="6" fill="#555">{t}</text>
            ))}
            <path d="M210 405.5h9" stroke="#c02020" />
        </svg>
    );
}

function TableChair({ x, y, rot }: { x: number; y: number; rot: number }) {
    return (
        <g transform={'translate(' + x + ' ' + y + ') rotate(' + rot + ')'}>
            <rect x="-16" y="-21" width="32" height="30" rx="3" fill="#5a2a28" />
            <rect x="-19" y="-17" width="5" height="24" rx="1.5" fill="#74494a" />
            <rect x="14" y="-17" width="5" height="24" rx="1.5" fill="#74494a" />
            <path d="M-16-26c10-2 22-2 32 0 3 1 3 6 0 7-10-2-22-2-32 0-3-1-3-6 0-7z" fill="#7d5153" />
        </g>
    );
}

function FloorPlan() {
    return (
        <svg className="block w-full h-full" viewBox="253 113 754 533">
            <defs>
                <linearGradient id="wood" x1="0" y1="0" x2="1" y2="1">
                    <stop offset="0" stopColor="#95561a" />
                    <stop offset=".55" stopColor="#a0642c" />
                    <stop offset="1" stopColor="#8f4f14" />
                </linearGradient>
            </defs>
            <path
                d="M333 167H973Q979 167 979 173L981 601Q981 607 975 607H335Q329 607 329 601L327 173Q327 167 333 167ZM340 180L342 595H968L966 180Z"
                fill="#3f3f3f"
                fillRule="evenodd"
            />
            <rect x="326" y="333" width="16" height="119" fill="#fff" />
            <path d="M328 333v119M340 333v119" stroke="#c8c8c8" />
            <g fill="#fff" stroke="#555">
                <rect x="270.5" y="334.5" width="57" height="3" />
                <rect x="270.5" y="446.5" width="57" height="3" />
            </g>
            <path d="M270.5 337C271 365 295 391 328 392C295 393 271 420 270.5 446" fill="none" stroke="#555" />
            <rect x="516" y="168" width="280" height="12" fill="#fff" stroke="#444" />
            <path d="M516 174h280" stroke="#777" />
            <path d="M515 169v10M796 169v10" stroke="#111" strokeWidth="2" />
            <circle cx="656" cy="174" r="1.5" fill="#fff" stroke="#555" />
            <rect x="341.5" y="189.5" width="38" height="101" fill="#92571f" stroke="#a08060" />
            <rect x="343.5" y="482.5" width="38" height="100" fill="#92571f" stroke="#a08060" />
            <path d="M867 181H966V279C909 277 868 236 867 181Z" fill="#ab6e34" stroke="#8a8a8a" strokeWidth=".5" />
            {[595, 649, 703].map(x => (
                <g key={x}>
                    <TableChair x={x} y={x === 649 ? 318 : 321} rot={0} />
                    <TableChair x={x} y={x === 649 ? 400 : 397} rot={180} />
                </g>
            ))}
            <TableChair x={565} y={359} rot={-90} />
            <TableChair x={734} y={359} rot={90} />
            <path d="M560 322Q649 304 739 322V397Q649 414 560 397Z" fill="url(#wood)" stroke="#7a4a1c" strokeWidth=".5" />
        </svg>
    );
}

function ScrollArrow({ up }: { up?: boolean }) {
    return <div className={'w-0 h-0 border-l-[3.5px] border-r-[3.5px] border-l-transparent border-r-transparent ' + (up ? 'border-b-[4px] border-b-[#555]' : 'border-t-[4px] border-t-[#555]')} />;
}

function PageNav() {
    return (
        <div className="h-[14px] shrink-0 bg-[#f0f0f0] flex items-center text-[8px] text-[#555]">
            <span className="ml-[18px] w-[6px] text-[#aaa]">&lt;</span>
            <div className="w-[108px] h-[12px] bg-white border border-[#ddd] flex items-center justify-between pr-[4px]">
                <span className="ml-[30px]">Page1 (1/1)</span><Caret />
            </div>
            <span className="ml-[4px] w-[6px] text-[#aaa]">&gt;</span>
            <div className="ml-[2px] w-[11px] h-[12px] bg-white border border-[#ccc] flex items-center justify-center">
                <div className="w-0 h-0 border-y-[3.5px] border-r-[4px] border-y-transparent border-r-[#555]" />
            </div>
            <div className="ml-[3px] w-[661px] h-[12px] bg-white border border-[#ccc]" />
            <div className="ml-[2px] w-[10px] h-[12px] bg-white flex items-center justify-center">
                <div className="w-0 h-0 border-y-[3.5px] border-l-[4px] border-y-transparent border-l-[#555]" />
            </div>
            <div className="ml-[3px] w-[10px] h-[11px] bg-[#d8e4ee] border border-dotted border-[#888]" />
        </div>
    );
}

function ColorsPanel() {
    return (
        <div className="h-[44px] shrink-0 bg-white flex flex-col">
            <div className="h-[26px] shrink-0 flex items-center justify-between pl-[4px] pr-[5px]">
                <span className="text-[10.5px] text-[#c1553b]">Colors</span>
                <div className="flex items-center gap-[3px]"><Pin /><CloseX /></div>
            </div>
            <div className="flex items-center h-[11px] pl-[1px]">
                <div className="w-[21px] h-[10px] bg-[#e8e8e8] border border-[#bbb] flex items-center justify-center shrink-0">
                    <svg width="14" height="8" viewBox="0 0 14 8"><circle cx="5" cy="4" r="3.5" fill="#2c6ea8" /><path d="M11 1v6" stroke="#c02020" strokeWidth="1.5" strokeDasharray="1.5 1" /></svg>
                </div>
                <div className="ml-[1px] w-[793px] flex shrink-0">
                    {COLORS.map(c => (
                        <div key={c} className="flex-1 h-[11px] border-r border-[#d8d8d8]" style={{ backgroundColor: c }} />
                    ))}
                </div>
            </div>
        </div>
    );
}

function Workspace() {
    return (
        <div className="w-[845px] shrink-0 flex flex-col min-h-0 relative">
            <div className="h-[17px] shrink-0 bg-[#f0f0f0] flex pt-px">
                <div className="w-[12px] shrink-0 flex items-center justify-center"><div className="w-[6px] h-[3px] bg-[#999]" /></div>
                <HorizontalRuler />
            </div>
            <div className="flex-1 min-h-0 flex">
                <div className="w-[12px] shrink-0 bg-[#f0f0f0]"><VerticalRuler /></div>
                <div className="w-[821px] shrink-0 bg-[#b0c1c0] overflow-hidden pl-[34px]">
                    <div className="w-[754px] h-[533px] bg-white shadow-[0_0_0_1px_#666,4px_2px_6px_rgba(0,0,0,0.35)]">
                        <FloorPlan />
                    </div>
                </div>
                <div className="w-[12px] shrink-0 bg-[#f4f4f4] flex flex-col items-center justify-between border-l border-[#ccc] pb-[1px]">
                    <div className="w-full h-[11px] bg-white border-b border-[#ccc] flex items-center justify-center"><ScrollArrow up /></div>
                    <div className="w-full h-[11px] bg-white border-t border-[#ccc] flex items-center justify-center"><ScrollArrow /></div>
                </div>
            </div>
            <PageNav />
            <ColorsPanel />
        </div>
    );
}

function SectionHead({ title, open = true, lineGap = 'gap-[3px]' }: { title: string; open?: boolean; lineGap?: string }) {
    return (
        <div className={'h-[14px] pl-[9px] flex items-center text-[8.4px] font-bold text-[#333] ' + lineGap}>
            {open
                ? <div className="w-0 h-0 mr-[2px] border-x-[3.5px] border-t-[4px] border-x-transparent border-t-[#222]" />
                : <div className="w-0 h-0 ml-[2px] mr-[3px] border-y-[3.5px] border-l-[4px] border-y-transparent border-l-[#222]" />}
            <span>{title}</span>
            <div className="flex-1 h-px bg-[#b8b8b8] ml-[2px] mt-[3px]" />
        </div>
    );
}

function Select({ value, disabled, h = 'h-[14px]', children }: { value?: string; disabled?: boolean; h?: string; children?: ReactNode }) {
    return (
        <div className={'w-[115px] border flex items-center justify-between pl-[3px] pr-[3px] text-[8px] ' + h + (disabled ? ' border-[#ddd] text-[#bbb]' : ' border-[#c8c8c8] text-[#444]')}>
            {value}{children}<Caret />
        </div>
    );
}

function FieldRow({ label, mt, children, muted }: { label: string; mt: string; children: ReactNode; muted?: boolean }) {
    return (
        <div className={'flex items-center pl-[20px] ' + mt}>
            <span className={'w-[64px] shrink-0 text-[8px] ' + (muted ? 'text-[#777]' : 'text-[#444]')}>{label}</span>
            {children}
        </div>
    );
}

function ScrollUpTiny() {
    return <div className="w-0 h-0 border-x-[2px] border-b-[3px] border-x-transparent border-b-[#555]" />;
}

function Spinner() {
    return (
        <div className="w-[10px] flex flex-col border border-[#c0c0c0] shrink-0">
            <div className="h-[7px] bg-[#f0f0f0] border-b border-[#c0c0c0] flex items-center justify-center"><ScrollUpTiny /></div>
            <div className="h-[7px] bg-[#f0f0f0] flex items-center justify-center"><Caret className="border-l-[2px] border-r-[2px]" /></div>
        </div>
    );
}

function OpacityRow({ swatch, mt }: { swatch: ReactNode; mt: string }) {
    return (
        <div className={'flex items-center pl-[20px] h-[15px] ' + mt}>
            <div className="w-[64px] shrink-0">{swatch}</div>
            <div className="w-[80px] h-[2px] bg-[#dcdcdc] relative shrink-0">
                <div className="absolute right-0 -top-[3px] w-[4px] h-[8px] bg-[#1b6fc2]" />
            </div>
            <div className="ml-[5px] w-[21px] h-[15px] border border-[#c8c8c8] text-[8px] text-[#444] flex items-center justify-center shrink-0">100%</div>
            <Spinner />
        </div>
    );
}

function FormatPanel() {
    return (
        <div className="flex-1 min-w-0 flex flex-col border-l-2 border-[#e4e4e4]">
            <PanelHeader title="Format" right="pr-[4px]" />
            <div className="h-[14px] shrink-0 flex items-stretch text-[8.4px] text-[#999] pl-[2px] whitespace-nowrap overflow-hidden">
                <div className="w-[41px] flex items-center justify-center bg-[#f5f5f5] border-r border-[#ddd]">Hypern...</div>
                <div className="w-[44px] flex items-center justify-center bg-[#f5f5f5] border-r border-[#ddd]">Present...</div>
                <div className="w-[22px] flex items-center justify-center bg-[#f5f5f5] border-r border-[#ddd]">Info</div>
                <div className="w-[42px] flex items-center justify-center bg-[#f5f5f5]">Arrange...</div>
                <div className="w-[35px] flex items-center justify-center border-t border-x border-t-[#c1553b] border-x-[#ddd] text-[#c1553b]">Format</div>
                <div className="w-[40px] flex items-center justify-center bg-[#f5f5f5]">Custom...</div>
            </div>
            <div className="flex flex-col pt-px">
                <SectionHead title="Fill" lineGap="gap-[1px]" />
                <FieldRow label="Type" mt="mt-[8px]"><Select value="Solid" h="h-[13px]" /></FieldRow>
                <OpacityRow
                    mt="mt-[5px]"
                    swatch={<div className="w-[47px] h-[13px] border border-[#f0cdbd] flex items-center justify-end pr-[3px]"><Caret /></div>}
                />
                <div className="mt-[9px]"><SectionHead title="Border" /></div>
                <FieldRow label="Type" mt="mt-[8px]"><Select value="Line" /></FieldRow>
                <OpacityRow
                    mt="mt-[6px]"
                    swatch={<div className="w-[46px] h-[15px] border border-[#ccc] flex items-center"><div className="w-[33px] h-full bg-[#333]" /><div className="flex-1 flex justify-center"><Caret /></div></div>}
                />
                <FieldRow label="Pattern" mt="mt-[7px]">
                    <Select h="h-[13px]">
                        <span className="text-[6px] mr-[4px]">1:</span>
                        <div className="flex-1 h-px bg-[#111] mr-[8px]" />
                    </Select>
                </FieldRow>
                <FieldRow label="Weight" mt="mt-[7px]">
                    <div className="w-[36px] h-[15px] border border-[#c8c8c8] text-[8px] text-[#444] pl-[2px] flex items-center">1 pt</div>
                    <Spinner />
                </FieldRow>
                <FieldRow label="Corner rounding" mt="mt-[2px]" muted><Select value="0 m" disabled /></FieldRow>
                <div className="mt-[7px]"><SectionHead title="Shadow" open={false} /></div>
                <div className="mt-[3px]"><SectionHead title="Make Same Attributes" /></div>
                <div className="mt-[7px] pl-[15px] flex text-[8px] text-[#444] text-center leading-[9px]">
                    <div className="w-[24px] flex flex-col items-center">
                        <svg width="10" height="13" viewBox="0 0 10 13" fill="#a8a8a8"><rect x="3.5" y="0" width="3" height="6" /><rect x="1" y="6" width="8" height="7" /></svg>
                        <span className="mt-[4px]">Fill</span>
                    </div>
                    <div className="w-[38px] flex flex-col items-center">
                        <svg width="12" height="13" viewBox="0 0 12 13" stroke="#999"><path d="M1 3h10M1 6h10M1 8h10M1 10h10" /></svg>
                        <span className="mt-[4px]">Border</span>
                    </div>
                    <div className="w-[28px] flex flex-col items-center">
                        <span className="h-[13px] font-serif text-[12px] leading-[13px] text-[#888]">A</span>
                        <span className="mt-[4px]">Text<br />Format</span>
                    </div>
                </div>
            </div>
        </div>
    );
}

function StatusBar() {
    return (
        <div className="h-[14px] shrink-0 flex flex-col">
            <div className="h-[12px] bg-[#d04423] text-white text-[8px] flex items-center relative pl-[2px]">
                <span>Ready</span>
                <span className="absolute left-[532px]">Mouse: [ -1.31, 11.46 ] m</span>
                <div className="absolute right-[5px] top-0 h-[12px] flex items-center">
                    <svg width="11" height="11" viewBox="0 0 11 11" fill="#fff"><path d="M2 6V3h1v2V1.5h1.2V5 1h1.2v4V1.5h1.2V5 3h1.2v5l-1 3H4L1 7z" /></svg>
                    <svg className="ml-[5px]" width="11" height="11" viewBox="0 0 11 11" fill="none" stroke="#f8d8cc"><path d="M.5 6V.5H6" strokeDasharray="1.5 1" /><circle cx="6.5" cy="6.5" r="2.5" /><path d="M8.5 8.5l2 2" /></svg>
                    <div className="ml-[2px] w-[16px] h-[12px] bg-[#f0a88e] flex items-center justify-center"><div className="w-[6px] h-[7px] bg-white rounded-[2px]" /></div>
                    <div className="ml-[3px] w-[4px] h-[1.5px] bg-white" />
                    <div className="ml-[3px] w-[65px] h-px bg-[#f0b0a0] relative"><div className="absolute left-[32px] -top-[3px] w-[2px] h-[7px] bg-white" /></div>
                    <span className="ml-[2px] text-[9px] font-bold leading-none">+</span>
                    <span className="ml-[10px]">101%</span>
                </div>
            </div>
            <div className="h-[2px] bg-[#111]" />
        </div>
    );
}

function MouseCursor() {
    return (
        <svg className="absolute left-[200px] top-[457px]" width="9" height="14" viewBox="0 0 9 14">
            <path d="M.5.5v11l2.5-2.2 2 4 1.800-.8-2-4H8z" fill="#fff" stroke="#444" strokeWidth=".8" />
        </svg>
    );
}

export default function App() {
    return (
        <div className="relative w-[1280px] h-[720px] overflow-hidden bg-white flex flex-col" style={{ fontFamily: FONT }}>
            <TitleBar />
            <TabsRow />
            <Ribbon />
            <div className="h-[611px] shrink-0 flex border-t border-[#e2e2e2]">
                <SolutionsPanel />
                <LibraryPanel />
                <Workspace />
                <FormatPanel />
            </div>
            <StatusBar />
            <MouseCursor />
        </div>
    );
}
